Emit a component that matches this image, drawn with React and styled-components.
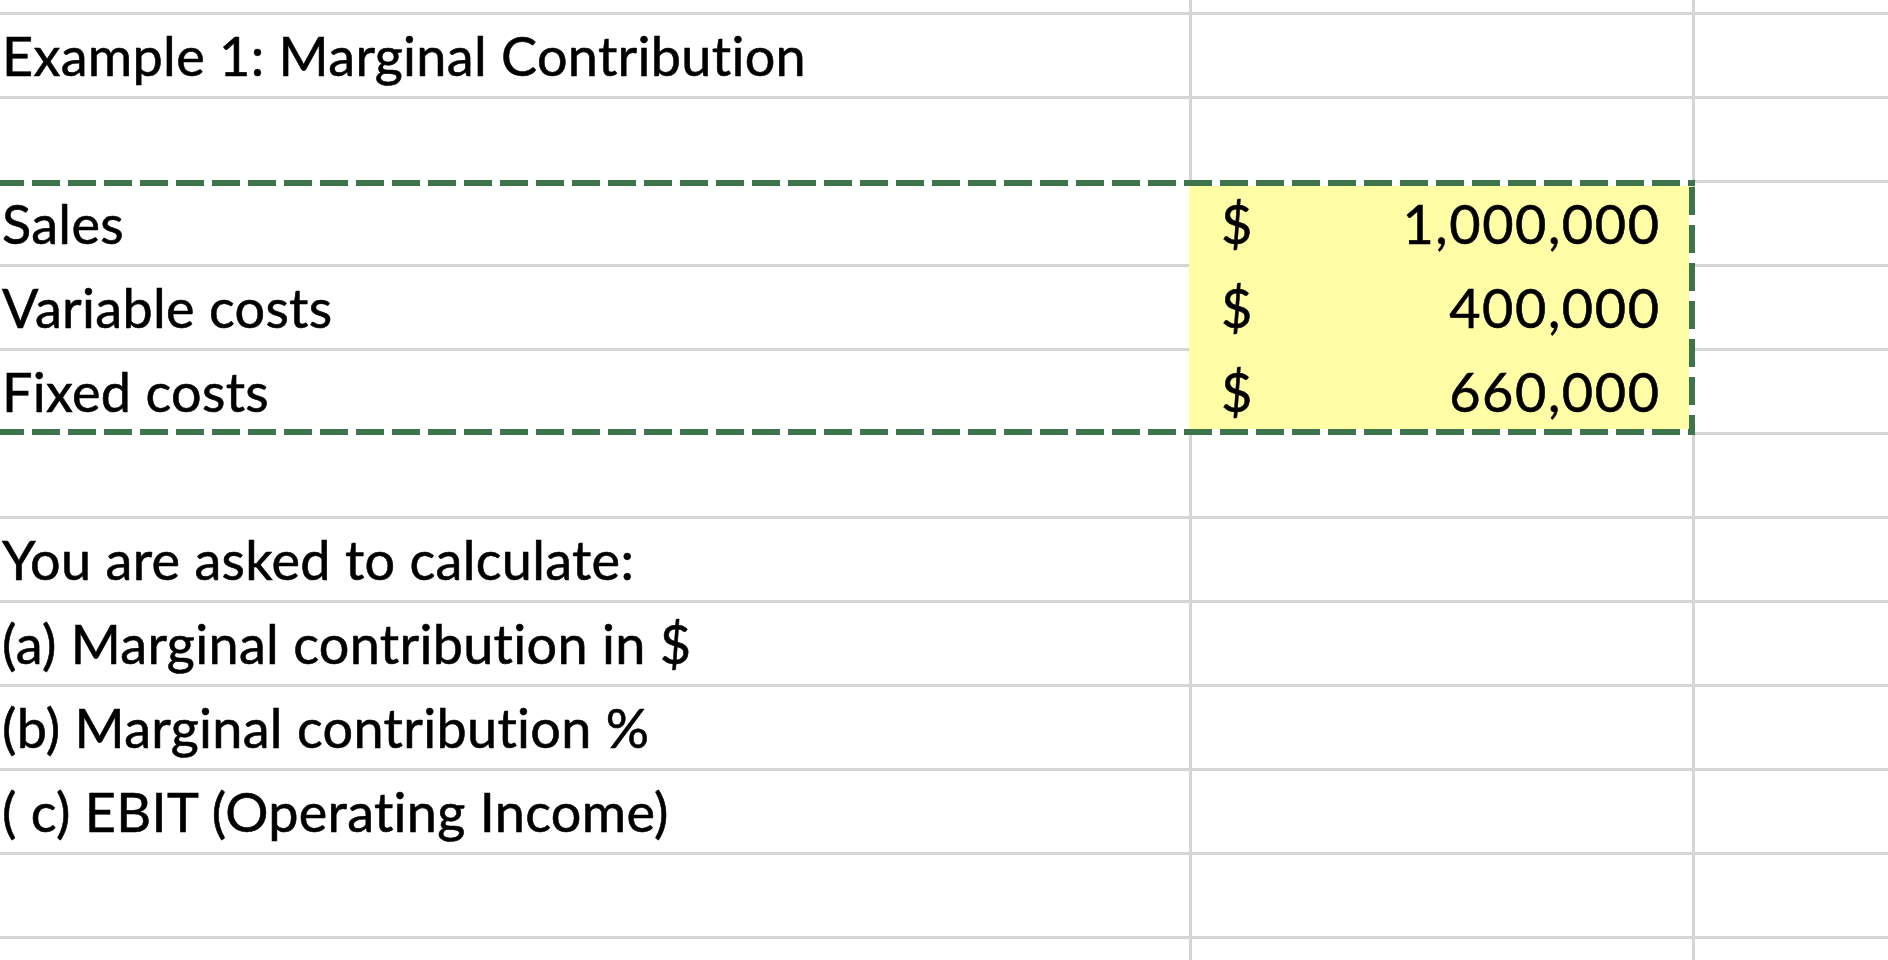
import React from 'react';
import styled, { createGlobalStyle } from 'styled-components';

const GRID = '#d5d5d5';
const FILL = '#fffda6';
const ANT = '#3e744c';

const figures = [
  { label: 'Sales', amount: '1,000,000' },
  { label: 'Variable costs', amount: '400,000' },
  { label: 'Fixed costs', amount: '660,000' },
];

const questions = [
  'You are asked to calculate:',
  '(a) Marginal contribution in $',
  '(b) Marginal contribution %',
  '( c) EBIT (Operating Income)',
];

function Line({ label, height }) {
  return (
    <Row $h={height}>
      <Cell>{label}</Cell>
      <Cell />
      <Cell />
    </Row>
  );
}

function App() {
  return (
    <>
      <Global />
      <Sheet>
        <Line height={15} />
        <Line label="Example 1: Marginal Contribution" />
        <Line />
        <Selection>
          {figures.map((f) => (
            <Row key={f.label}>
              <Cell>{f.label}</Cell>
              <Amount>
                <span>$</span>
                <Figure>{f.amount}</Figure>
              </Amount>
              <Cell />
            </Row>
          ))}
          <Ants />
        </Selection>
        <Line />
        {questions.map((q) => (
          <Line key={q} label={q} />
        ))}
        <Line />
        <Line />
      </Sheet>
    </>
  );
}

const Global = createGlobalStyle`
  html, body {
    margin: 0;
    padding: 0;
    background: #fff;
    overflow: hidden;
  }
`;

const Sheet = styled.div`
  width: 1888px;
  height: 960px;
  overflow: hidden;
  display: flex;
  flex-direction: column;
  font-family: Lato, "Liberation Sans", sans-serif;
  font-size: 54px;
  letter-spacing: 0.3px;
  font-variant-ligatures: none;
  -webkit-text-stroke: 0.6px #000;
  color: #000;
`;

const Row = styled.div`
  display: grid;
  grid-template-columns: 1192px 503px 1fr;
  height: ${(p) => p.$h || 84}px;
  flex-shrink: 0;
`;

const Cell = styled.div`
  border-right: 3px solid ${GRID};
  border-bottom: 3px solid ${GRID};
  line-height: 81px;
  padding-left: 2px;
  white-space: nowrap;
  overflow: visible;

  &:last-child {
    border-right: none;
  }
`;

const Amount = styled(Cell)`
  display: flex;
  justify-content: space-between;
  padding: 0 33px 0 29px;
  background: ${FILL};
  border-bottom-color: ${FILL};
  box-shadow: -3px 0 0 ${FILL};
`;

const Figure = styled.span`
  letter-spacing: 1.6px;
  margin-right: -1.6px;
`;

const Selection = styled.div`
  position: relative;
  flex-shrink: 0;
`;

const Ants = styled.div`
  position: absolute;
  top: -3px;
  bottom: 0;
  left: -40px;
  right: 193px;
  pointer-events: none;
  background:
    repeating-linear-gradient(to right, ${ANT} 0 28px, #fff 28px 36px) left top / 100% 6px no-repeat,
    repeating-linear-gradient(to right, ${ANT} 0 28px, #fff 28px 36px) left bottom / 100% 6px no-repeat,
    repeating-linear-gradient(to bottom, ${ANT} 0 28px, #fff 28px 38px) right 7px / 6px calc(100% - 7px) no-repeat;
`;

export default App;
